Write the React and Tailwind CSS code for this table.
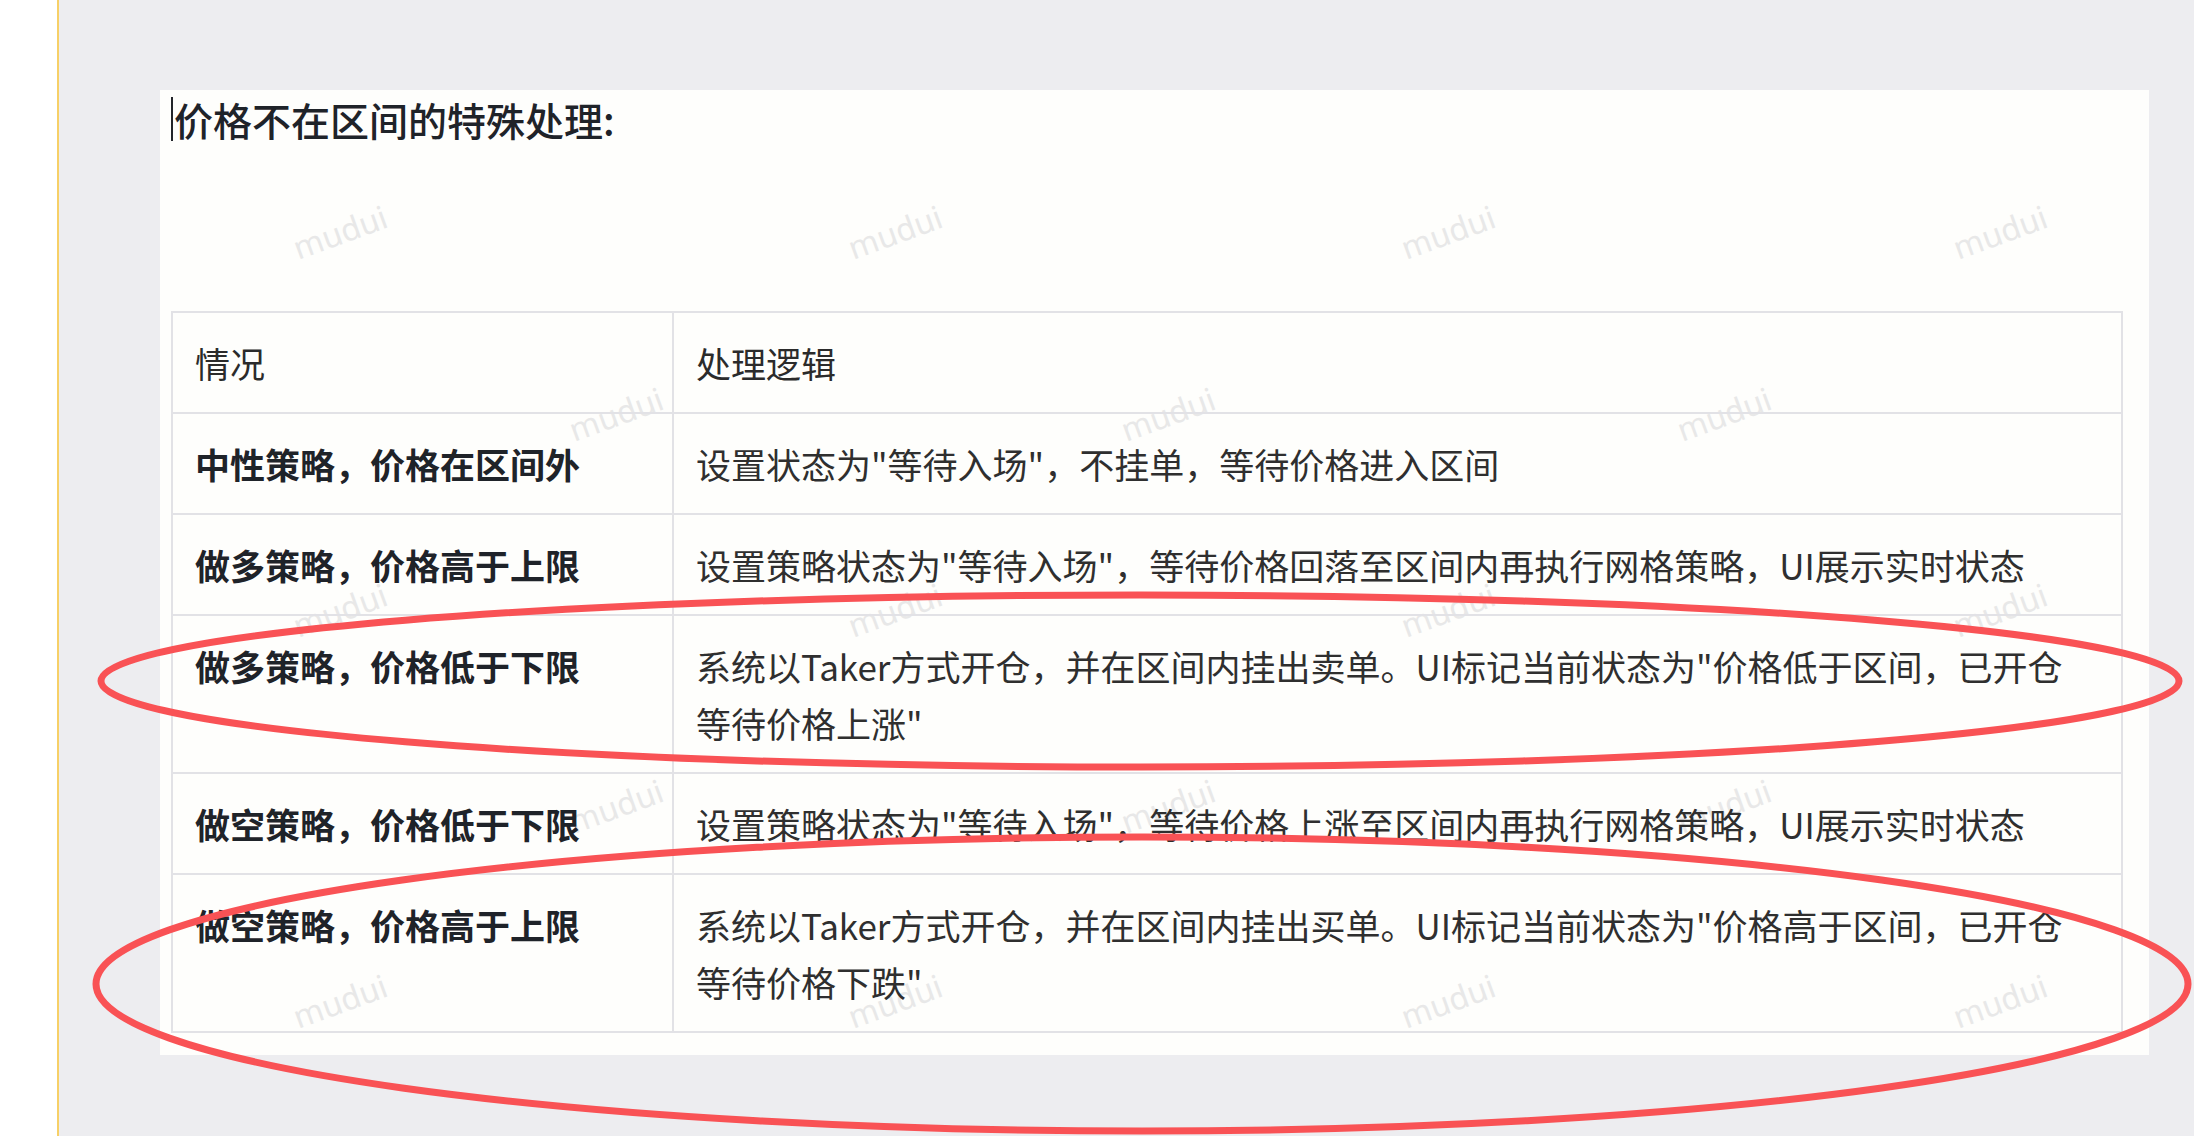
import React from 'react'

const rows = [
  { k: '中性策略，价格在区间外', v: ['设置状态为"等待入场"，不挂单，等待价格进入区间'] },
  { k: '做多策略，价格高于上限', v: ['设置策略状态为"等待入场"，等待价格回落至区间内再执行网格策略，UI展示实时状态'] },
  { k: '做多策略，价格低于下限', v: ['系统以Taker方式开仓，并在区间内挂出卖单。UI标记当前状态为"价格低于区间，已开仓', '等待价格上涨"'] },
  { k: '做空策略，价格低于下限', v: ['设置策略状态为"等待入场"，等待价格上涨至区间内再执行网格策略，UI展示实时状态'] },
  { k: '做空策略，价格高于上限', v: ['系统以Taker方式开仓，并在区间内挂出买单。UI标记当前状态为"价格高于区间，已开仓', '等待价格下跌"'] },
]

// watermark centres, relative to the card
const marks = [
  [180, 142], [735, 142], [1288, 142], [1840, 142],
  [456, 324], [1008, 324], [1564, 324],
  [180, 520], [735, 520], [1288, 520], [1840, 520],
  [456, 716], [1008, 716], [1564, 716],
  [180, 911], [735, 911], [1288, 911], [1840, 911],
]

export default function App() {
  return (
    <div className="relative flex h-[1136px] w-full overflow-hidden bg-[#ededf0] font-['Noto_Sans_CJK_SC','Noto_Sans',sans-serif]">
      {/* left strip */}
      <div className="flex w-[57px] shrink-0 flex-col bg-white pt-[710px]">
        <span className="-ml-[9px] text-[22px] font-bold leading-none text-[#222]">/</span>
      </div>
      <div className="w-[2px] shrink-0 bg-[#f7d067]" />

      {/* main area */}
      <div className="flex-1 pl-[101px] pt-[88px]">
        <div className="relative h-[965px] w-[1989px] bg-[#fefefc] pl-[11px] pr-[26px]">
          {/* watermark */}
          {marks.map(([x, y], i) => (
            <span
              key={i}
              className="pointer-events-none absolute -translate-x-1/2 -translate-y-1/2 -rotate-[20deg] text-[32px] leading-none text-[#e8e8e8] font-['Noto_Sans',sans-serif]"
              style={{ left: x, top: y }}
            >
              mudui
            </span>
          ))}

          {/* heading */}
          <div className="relative mt-[2px] flex h-[58px] items-center">
            <span className="mr-[1px] h-[44px] w-[2px] bg-[#22252a]" />
            <h2 className="text-[39px] font-medium leading-[58px] text-[#1f2329]">价格不在区间的特殊处理:</h2>
          </div>

          {/* table */}
          <table className="relative mt-[163px] w-[1952px] table-fixed border-collapse text-[35px]">
            <colgroup>
              <col className="w-[501px]" />
              <col />
            </colgroup>
            <tbody>
              <tr>
                <td className="border-2 border-[#e2e2e6] px-[22px] py-[21px] align-top leading-[57px] text-[#2b2b2b]">情况</td>
                <td className="border-2 border-[#e2e2e6] px-[22px] py-[21px] align-top leading-[57px] text-[#2b2b2b]">处理逻辑</td>
              </tr>
              {rows.map((r) => (
                <tr key={r.k}>
                  <td className="border-2 border-[#e2e2e6] px-[22px] py-[21px] align-top font-semibold leading-[57px] text-[#1f2329]">{r.k}</td>
                  <td className="border-2 border-[#e2e2e6] px-[22px] py-[21px] align-top leading-[57px] text-[#2f2f2f]">
                    {r.v.map((line, i) => (
                      <div key={i} className="whitespace-nowrap">{line}</div>
                    ))}
                  </td>
                </tr>
              ))}
            </tbody>
          </table>
        </div>
      </div>

      {/* hand-drawn red marks over the screenshot */}
      <svg className="pointer-events-none absolute inset-0" width="2194" height="1136" viewBox="0 0 2194 1136" fill="none">
        <ellipse cx="1140" cy="681" rx="1039" ry="86" stroke="#f95255" strokeWidth="7" />
        <ellipse cx="1142" cy="984" rx="1046" ry="147" stroke="#f95255" strokeWidth="7" />
      </svg>
    </div>
  )
}
